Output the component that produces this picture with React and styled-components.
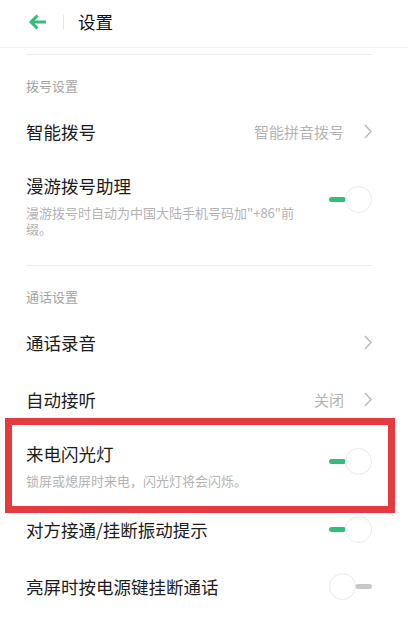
import React from 'react'
import styled, { createGlobalStyle } from 'styled-components'

const GlobalStyle = createGlobalStyle`
  html, body {
    margin: 0;
    padding: 0;
    background: #fff;
  }
  body {
    font-family: "Noto Sans CJK SC", "Noto Sans", sans-serif;
    color: #1c1c1c;
  }
`

const GREEN = '#2fbf78'

const Page = styled.div`
  width: 408px;
  min-height: 627px;
  background: #fff;
  overflow: hidden;
`

const Header = styled.div`
  height: 47px;
  display: flex;
  align-items: center;
  padding-left: 28px;
  border-bottom: 1px solid #f0f0f0;
  box-sizing: border-box;
  height: 48px;
`

const Back = styled.svg`
  width: 19px;
  height: 16px;
  margin-top: -3px;
`

const VLine = styled.div`
  width: 1px;
  height: 15px;
  background: #e6e6e6;
  margin: -3px 14px 0 16px;
`

const Title = styled.div`
  font-size: 17.5px;
  line-height: 24px;
  margin-top: -4px;
  color: #111;
`

const Divider = styled.div`
  height: 1px;
  background: #ececec;
  margin: ${p => p.$top || 0}px 36px 0 26px;
`

const Label = styled.div`
  font-size: 13px;
  line-height: 18px;
  color: #a3a3a3;
  padding: 22px 26px 8px;
`

const Row = styled.div`
  position: relative;
  display: flex;
  align-items: center;
  min-height: ${p => (p.$tall ? 0 : 57)}px;
  padding: ${p => (p.$tall ? '14px 36px 12px 26px' : '0 36px 0 26px')};
  box-sizing: border-box;
`

const Texts = styled.div`
  flex: 1;
  min-width: 0;
  padding-right: ${p => p.$pr || 0}px;
`

const Name = styled.div`
  font-size: 17.5px;
  line-height: 24px;
  color: #1c1c1c;
`

const Sub = styled.div`
  font-size: 13px;
  line-height: 16px;
  color: #b3b3b3;
  margin-top: 7px;
`

const Value = styled.div`
  font-size: 15px;
  color: #b4b4b4;
  margin-right: 20px;
`

const Chevron = () => (
  <svg width="8" height="15" viewBox="0 0 8 15">
    <polyline points="1,1 7,7.5 1,14" fill="none" stroke="#bdbdbd" strokeWidth="1.6" />
  </svg>
)

const SwitchBox = styled.div`
  display: flex;
  align-items: center;
  flex-direction: ${p => (p.$on ? 'row' : 'row-reverse')};
  width: 43px;
  flex-shrink: 0;
  margin-top: ${p => p.$shift || 0}px;
`

const Track = styled.div`
  width: 17px;
  height: 5px;
  border-radius: 3px;
  background: ${p => (p.$on ? GREEN : '#c9c9c9')};
  margin-${p => (p.$on ? 'right' : 'left')}: -1px;
`

const Knob = styled.div`
  width: 27px;
  height: 27px;
  border-radius: 50%;
  background: #fff;
  border: 1px solid #e8e8e8;
  box-sizing: border-box;
  position: relative;
  z-index: 1;
`

const Switch = ({ on, shift }) => (
  <SwitchBox $on={on} $shift={shift}>
    <Track $on={on} />
    <Knob />
  </SwitchBox>
)

const Highlight = styled.div`
  position: absolute;
  left: 5px;
  right: 13px;
  top: -10px;
  bottom: -12px;
  border: 7px solid #e63a3e;
  pointer-events: none;
`

export default function App() {
  return (
    <Page>
      <GlobalStyle />
      <Header>
        <Back viewBox="0 0 19 16">
          <path d="M18 8H3M9.5 1.5L3 8l6.5 6.5" fill="none" stroke={GREEN} strokeWidth="3" />
        </Back>
        <VLine />
        <Title>设置</Title>
      </Header>
      <Divider $top={6} />

      <Label>拨号设置</Label>
      <Row>
        <Texts><Name>智能拨号</Name></Texts>
        <Value>智能拼音拨号</Value>
        <Chevron />
      </Row>
      <Row $tall>
        <Texts $pr={24}>
          <Name>漫游拨号助理</Name>
          <Sub>漫游拨号时自动为中国大陆手机号码加"+86"前缀。</Sub>
        </Texts>
        <Switch on shift={-12} />
      </Row>
      <Divider $top={16} />

      <Label>通话设置</Label>
      <Row>
        <Texts><Name>通话录音</Name></Texts>
        <Chevron />
      </Row>
      <Row>
        <Texts><Name>自动接听</Name></Texts>
        <Value>关闭</Value>
        <Chevron />
      </Row>
      <Row $tall>
        <Texts>
          <Name>来电闪光灯</Name>
          <Sub>锁屏或熄屏时来电，闪光灯将会闪烁。</Sub>
        </Texts>
        <Switch on shift={-8} />
        <Highlight />
      </Row>
      <Row>
        <Texts><Name>对方接通/挂断振动提示</Name></Texts>
        <Switch on />
      </Row>
      <Row>
        <Texts><Name>亮屏时按电源键挂断通话</Name></Texts>
        <Switch />
      </Row>
    </Page>
  )
}
